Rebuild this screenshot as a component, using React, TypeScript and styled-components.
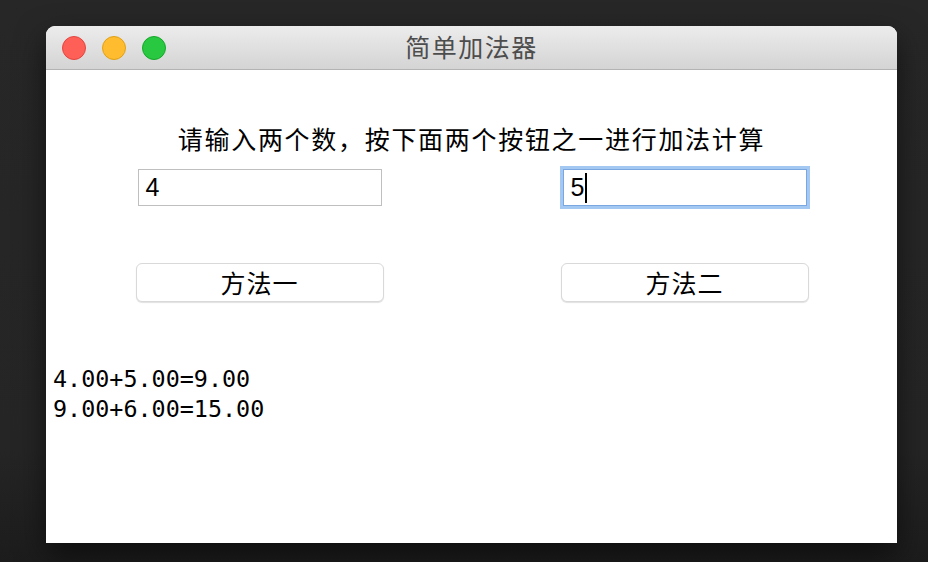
import React from 'react';
import styled, { createGlobalStyle } from 'styled-components';

const GlobalStyle = createGlobalStyle`
  html, body {
    margin: 0;
    padding: 0;
    background: #272727;
    width: 928px;
    height: 562px;
    overflow: hidden;
  }
  * { box-sizing: border-box; }
`;

const cjk = `"Noto Sans CJK SC", "Noto Sans", sans-serif`;

const Desktop = styled.div`
  width: 928px;
  height: 562px;
  padding: 26px 0 0 46px;
  background: linear-gradient(180deg, #272727 0%, #252525 80%, #1c1c1c 100%);
`;

const Window = styled.div`
  width: 851px;
  height: 517px;
  display: flex;
  flex-direction: column;
  background: #ffffff;
  border-radius: 9px 9px 0 0;
  box-shadow: 0 12px 30px rgba(0, 0, 0, 0.55);
  overflow: hidden;
`;

const TitleBar = styled.div`
  position: relative;
  height: 44px;
  flex-shrink: 0;
  display: flex;
  align-items: center;
  justify-content: center;
  padding-bottom: 2px;
  background: linear-gradient(180deg, #ececec 0%, #d4d4d4 100%);
  border-bottom: 1px solid #b3b3b3;
`;

const Lights = styled.div`
  position: absolute;
  left: 16px;
  top: 10px;
  display: flex;
  gap: 16px;
`;

const Light = styled.span<{ $fill: string; $edge: string }>`
  width: 24px;
  height: 24px;
  border-radius: 50%;
  background: ${(p) => p.$fill};
  border: 1px solid ${(p) => p.$edge};
`;

const Title = styled.div`
  font-family: ${cjk};
  font-size: 25px;
  letter-spacing: 1.5px;
  color: #4d4d4d;
  line-height: 1;
`;

const Body = styled.div`
  flex: 1;
  display: flex;
  flex-direction: column;
`;

const Prompt = styled.div`
  margin-top: 53px;
  font-family: ${cjk};
  font-size: 25px;
  letter-spacing: 1.7px;
  line-height: 30px;
  color: #000;
  text-align: center;
`;

const Grid = styled.div<{ $top: number }>`
  display: grid;
  grid-template-columns: 1fr 1fr;
  padding-left: 1px;
  margin-top: ${(p) => p.$top}px;
  justify-items: center;
`;

const Field = styled.div<{ $focused?: boolean }>`
  width: 244px;
  height: 37px;
  display: flex;
  align-items: center;
  padding-left: 7px;
  font-family: "Liberation Sans", Arial, sans-serif;
  font-size: 25px;
  color: #000;
  background: #fff;
  border: 1px solid ${(p) => (p.$focused ? '#7aa7e0' : '#bfbfbf')};
  box-shadow: ${(p) => (p.$focused ? '0 0 0 3px #a3c8f2' : 'none')};
`;

const Caret = styled.span`
  display: inline-block;
  width: 2px;
  height: 30px;
  margin-left: 1px;
  background: #000;
`;

const Button = styled.button`
  width: 248px;
  height: 39px;
  border: 1px solid #d9d9d9;
  border-radius: 6px;
  background: #fff;
  box-shadow: 0 1px 1px rgba(0, 0, 0, 0.12);
  font-family: ${cjk};
  font-size: 25px;
  letter-spacing: 1px;
  color: #000;
  padding: 0;
  line-height: 1;
`;

const Output = styled.pre`
  margin: 62px 0 0 7px;
  font-family: "DejaVu Sans Mono", "Liberation Mono", monospace;
  font-size: 23.4px;
  line-height: 30px;
  color: #000;
`;

const results = ['4.00+5.00=9.00', '9.00+6.00=15.00'];

export default function App() {
  return (
    <>
      <GlobalStyle />
      <Desktop>
        <Window>
          <TitleBar>
            <Lights>
              <Light $fill="#fe5f57" $edge="#e2463f" />
              <Light $fill="#febc2e" $edge="#e1a116" />
              <Light $fill="#28c840" $edge="#16a82a" />
            </Lights>
            <Title>简单加法器</Title>
          </TitleBar>
          <Body>
            <Prompt>请输入两个数，按下面两个按钮之一进行加法计算</Prompt>
            <Grid $top={16}>
              <Field>4</Field>
              <Field $focused>
                5<Caret />
              </Field>
            </Grid>
            <Grid $top={57}>
              <Button>方法一</Button>
              <Button>方法二</Button>
            </Grid>
            <Output>{results.join('\n')}</Output>
          </Body>
        </Window>
      </Desktop>
    </>
  );
}
